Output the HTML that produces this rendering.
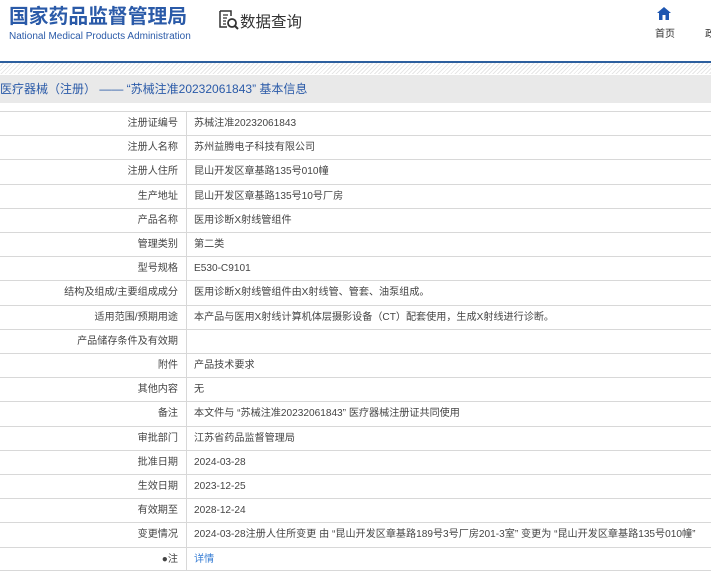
<!DOCTYPE html>
<html><head><meta charset="utf-8"><style>
*{margin:0;padding:0;box-sizing:border-box}
body{width:711px;height:575px;overflow:hidden;background:#fff;font-family:"Liberation Sans","Noto Sans CJK SC",sans-serif;position:relative}
.logo{position:absolute;left:9px;top:3px;font-size:19.8px;font-weight:bold;color:#2a5aa8;letter-spacing:0;white-space:nowrap;line-height:28px}
.sub{position:absolute;left:9px;top:31px;font-size:10px;color:#2a5aa8;white-space:nowrap}
.q{position:absolute;left:218px;top:9px;font-size:15.5px;color:#333;white-space:nowrap}
.home{position:absolute;left:655px;top:25px;font-size:10px;color:#333}
.zheng{position:absolute;left:705px;top:25px;font-size:10px;color:#333}
.line{position:absolute;left:0;top:61px;width:711px;height:2px;background:#2d5f9e}
.hatch{position:absolute;left:0;top:63px;width:711px;height:11px;background:repeating-linear-gradient(135deg,#fff 0 2px,#e6e6e6 2px 3px)}
.bar{position:absolute;left:0;top:75px;width:711px;height:28px;background:#e9e9e9;font-size:12px;color:#2a5aa8;line-height:28px;white-space:nowrap}
.row{position:absolute;left:0;width:711px;height:24.2px;border-top:1px solid #d8d8d8;font-size:10.1px;color:#444;line-height:23px;white-space:nowrap}
.row .l{position:absolute;left:0;width:187px;padding-right:8px;text-align:right;border-right:1px solid #d8d8d8;height:100%}
.row .v{position:absolute;left:194px}
</style></head><body>
<div class="logo">国家药品监督管理局</div>
<div class="sub">National Medical Products Administration</div>
<div class="q"><svg width="22" height="22" viewBox="0 0 22 22" style="vertical-align:-4px"><path d="M2 2h11v5M2 2v16h7" fill="none" stroke="#333" stroke-width="1.5"/><path d="M5 6h5M5 9h4M5 12h3M5 15h3" stroke="#333" stroke-width="1.3"/><circle cx="14" cy="14" r="4" fill="none" stroke="#333" stroke-width="1.8"/><path d="M17 17l3 3" stroke="#333" stroke-width="2"/></svg>数据查询</div>
<svg style="position:absolute;left:657px;top:7px" width="14" height="13" viewBox="0 0 14 13"><path d="M7 0L0 6h2v7h3.5V8h3v5H12V6h2z" fill="#1d55b0"/></svg>
<div class="home">首页</div><div class="zheng">政</div>
<div class="line"></div><div class="hatch"></div>
<div class="bar">医疗器械（注册） —— “苏械注准20232061843” 基本信息</div>
<div class="row" style="top:111px"><div class="l">注册证编号</div><div class="v">苏械注准20232061843</div></div>
<div class="row" style="top:135.2px"><div class="l">注册人名称</div><div class="v">苏州益腾电子科技有限公司</div></div>
<div class="row" style="top:159.4px"><div class="l">注册人住所</div><div class="v">昆山开发区章基路135号010幢</div></div>
<div class="row" style="top:183.6px"><div class="l">生产地址</div><div class="v">昆山开发区章基路135号10号厂房</div></div>
<div class="row" style="top:207.8px"><div class="l">产品名称</div><div class="v">医用诊断X射线管组件</div></div>
<div class="row" style="top:232px"><div class="l">管理类别</div><div class="v">第二类</div></div>
<div class="row" style="top:256.2px"><div class="l">型号规格</div><div class="v">E530-C9101</div></div>
<div class="row" style="top:280.4px"><div class="l">结构及组成/主要组成成分</div><div class="v">医用诊断X射线管组件由X射线管、管套、油泵组成。</div></div>
<div class="row" style="top:304.6px"><div class="l">适用范围/预期用途</div><div class="v">本产品与医用X射线计算机体层摄影设备（CT）配套使用，生成X射线进行诊断。</div></div>
<div class="row" style="top:328.8px"><div class="l">产品储存条件及有效期</div><div class="v"></div></div>
<div class="row" style="top:353px"><div class="l">附件</div><div class="v">产品技术要求</div></div>
<div class="row" style="top:377.2px"><div class="l">其他内容</div><div class="v">无</div></div>
<div class="row" style="top:401.4px"><div class="l">备注</div><div class="v">本文件与 “苏械注准20232061843” 医疗器械注册证共同使用</div></div>
<div class="row" style="top:425.6px"><div class="l">审批部门</div><div class="v">江苏省药品监督管理局</div></div>
<div class="row" style="top:449.8px"><div class="l">批准日期</div><div class="v">2024-03-28</div></div>
<div class="row" style="top:474px"><div class="l">生效日期</div><div class="v">2023-12-25</div></div>
<div class="row" style="top:498.2px"><div class="l">有效期至</div><div class="v">2028-12-24</div></div>
<div class="row" style="top:522.4px"><div class="l">变更情况</div><div class="v">2024-03-28注册人住所变更 由 “昆山开发区章基路189号3号厂房201-3室” 变更为 “昆山开发区章基路135号010幢”</div></div>
<div class="row" style="top:546.6px;border-bottom:1px solid #d8d8d8"><div class="l">●注</div><div class="v" style="color:#3a7fd5">详情</div></div>
</body></html>
